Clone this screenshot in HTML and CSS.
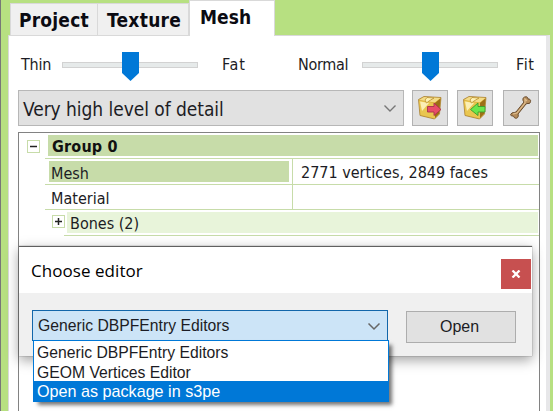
FILE: index.html
```
<!DOCTYPE html>
<html lang="en">
<head>
<meta charset="utf-8">
<title>Mesh editor</title>
<link rel="stylesheet" href="styles.css">
</head>
<body>
<div class="window">
  <nav class="tabs">
    <div class="tab tab-project"><span>Project</span></div>
    <div class="tab tab-texture"><span>Texture</span></div>
    <div class="tab active"><span>Mesh</span></div>
  </nav>
  <main class="panel">
    <div class="sliders">
      <span class="label thin">Thin</span>
      <div class="slider"><svg class="thumb" width="17" height="29" viewBox="0 0 17 29"><path d="M0 0H17V21L8.5 29L0 21Z"/></svg></div>
      <span class="label fat">Fat</span>
      <span class="label normal">Normal</span>
      <div class="slider"><svg class="thumb" width="17" height="29" viewBox="0 0 17 29"><path d="M0 0H17V21L8.5 29L0 21Z"/></svg></div>
      <span class="label fit">Fit</span>
    </div>
    <div class="toolbar">
      <div class="select"><span>Very high level of detail</span>
        <svg width="14" height="9" viewBox="0 0 14 9"><path d="M1.5 1.5L7 7L12.5 1.5" fill="none" stroke="#777" stroke-width="1.4"/></svg>
      </div>
      <button class="tool"><svg width="26" height="26" viewBox="0 0 26 26">
        <path d="M1.500 4.500L7 1.500L24 2.500L22.500 19L17.500 24L3 20.500Z" fill="#d5a52a" stroke="#a98337" stroke-width=".8"/>
        <path d="M2 5L7 2L23.500 3L18 7.500Z" fill="#f3dc88"/><path d="M2 5.500L18 8V23.500L3.500 20Z" fill="#e9c650"/>
        <path d="M3 6.500L12 8L5 16Z" fill="#fbefb5"/><path d="M18 8L23.500 3.500L22 18.500L18 23Z" fill="#9c6f16"/>
        <path d="M10 2.500L8 5L9.500 8L12 6L17 3Z" fill="#fff3b4" stroke="#b78d30" stroke-width=".8"/>
        <path d="M10.500 11.500H17V8L24 14.500L17 20.500V17H10.500Z" fill="#e84d68" stroke="#a8324a" stroke-width=".9"/>
      </svg></button>
      <button class="tool import"><svg width="26" height="26" viewBox="0 0 26 26">
        <path d="M1.500 4.500L7 1.500L24 2.500L22.500 19L17.500 24L3 20.500Z" fill="#d5a52a" stroke="#a98337" stroke-width=".8"/>
        <path d="M2 5L7 2L23.500 3L18 7.500Z" fill="#f3dc88"/><path d="M2 5.500L18 8V23.500L3.500 20Z" fill="#e9c650"/>
        <path d="M3 6.500L12 8L5 16Z" fill="#fbefb5"/><path d="M18 8L23.500 3.500L22 18.500L18 23Z" fill="#9c6f16"/>
        <path d="M10 2.500L8 5L9.500 8L12 6L17 3Z" fill="#fff3b4" stroke="#b78d30" stroke-width=".8"/>
        <path d="M23 11.500H16V8L8.500 14.500L16 20.500V17H23Z" fill="#6be64c" stroke="#3c9a2c" stroke-width=".9"/>
      </svg></button>
      <button class="tool bone"><svg width="26" height="26" viewBox="0 0 26 26">
        <path d="M3 19C4 17 6 18 8 17L16 7C14 5 15 2 17 2C19 1 20 3 20 4C23 4 23 6 22 8C21 9 19 8 18 9L10 19C11 22 9 24 7 23C6 23 6 21 5 21C3 21 2 20 3 19Z" fill="#b58c5b" stroke="#684a2b" stroke-width="1"/>
        <path d="M5 19L9 18L17 8L17 4L19 6" fill="none" stroke="#dfbd8c" stroke-width="1.2"/>
      </svg></button>
    </div>
    <section class="grid">
      <div class="row group"><i class="toggle">
        <svg width="13" height="13"><path d="M3 6.500H10" stroke="#222" stroke-width="1.500"/></svg></i>
        <div class="band"><b>Group 0</b></div></div>
      <div class="row item"><div class="name selected"><span>Mesh</span></div><div class="value"><span>2771 vertices, 2849 faces</span></div></div>
      <div class="row item short"><div class="name"><span>Material</span></div><div class="value"></div></div>
      <div class="row bones"><i class="toggle">
        <svg width="13" height="13"><path d="M3 6.500H10M6.500 3V10" stroke="#222" stroke-width="1.500"/></svg></i>
        <div class="band"><span>Bones (2)</span></div></div>
    </section>
  </main>
</div>
<div class="dialog">
  <header><span class="title">Choose editor</span><button class="close"><svg width="10" height="8" viewBox="0 0 10 8"><path d="M1.500 .5L8.500 7.500M8.500 .5L1.500 7.500" stroke="#fff" stroke-width="2.300"/></svg></button></header>
  <div class="content">
    <div class="combo"><span class="generic">Generic DBPFEntry Editors</span>
      <svg width="14" height="9" viewBox="0 0 14 9"><path d="M1.500 1.500L7 7L12.500 1.500" fill="none" stroke="#666" stroke-width="1.500"/></svg>
      <div class="menu">
        <div class="option"><span class="generic">Generic DBPFEntry Editors</span></div>
        <div class="option"><span class="geom">GEOM Vertices Editor</span></div>
        <div class="option chosen"><span class="package">Open as package in s3pe</span></div>
      </div>
    </div>
    <button class="open"><span>Open</span></button>
  </div>
</div>
</body>
</html>
```
FILE: styles.css
```
* { box-sizing: border-box; }
body { margin: 0; width: 553px; height: 411px; overflow: hidden; position: relative; background: #b7e081; color: #1c1c24; font-family: "DejaVu Sans Condensed", "DejaVu Sans", sans-serif; font-stretch: condensed; font-size: 17px; }
span, b { white-space: nowrap; }
button { padding: 0; margin: 0; border-radius: 0; display: flex; align-items: center; justify-content: center; }
svg { display: block; flex: none; }
.window { height: 411px; border-left: 1px solid #777; padding-left: 7px; display: flex; flex-direction: column; }
.tabs { height: 35px; padding-left: 2px; display: flex; align-items: flex-end; flex: none; }
.tab { height: 32px; background: #f0f0f0; border: 1px solid #d9d9d9; border-bottom: 0; font-weight: bold; font-size: 19px; line-height: 32px; padding-left: 8px; color: #0b0b12; }
.tab-project { width: 88px; letter-spacing: .2px; }
.tab-texture { width: 91px; padding-left: 9px; border-left: 0; letter-spacing: .3px; }
.tab.active { width: 86px; height: 36px; background: #fff; margin-bottom: -1px; padding-left: 10px; line-height: 33px; position: relative; letter-spacing: .1px; }
.panel { width: 542px; flex: 1; background: #fff; border: 1px solid #d9d9d9; border-right: 4px solid #e7e7e9; border-bottom: 0; padding: 0 6px 0 9px; }
.sliders { height: 54px; display: flex; align-items: center; padding: 4px 0 0 3px; }
.label { font-size: 16px; line-height: 22px; flex: none; }
.thin { width: 41px; letter-spacing: -.2px; }
.slider { width: 136px; flex: none; height: 6px; background: #e6eaea; border: 1px solid #d2d2d2; display: flex; justify-content: center; align-items: center; }
.thumb { fill: #0078d7; position: relative; top: 1px; }
.fat { width: 75px; padding-left: 24px; letter-spacing: .8px; }
.normal { width: 89px; padding-left: 25px; letter-spacing: -.3px; }
.fit { padding-left: 18px; letter-spacing: .6px; }
.toolbar { height: 36px; display: flex; }
.select { width: 386px; border: 1px solid #b7b7b7; background: #e1e1e1; display: flex; justify-content: space-between; align-items: center; padding: 1px 6px 0 4px; font-size: 19px; letter-spacing: -.05px; }
.tool { width: 36px; height: 36px; background: #e1e1e1; border: 1px solid #b2b2b2; margin-left: 8px; }
.tool.import { margin-left: 9px; }
.tool.bone { margin-left: 10px; }
.grid { margin-top: 6px; width: 522px; height: 290px; border: 1px solid #828282; padding: 2px 0 0 26px; font-size: 16px; color: #1c1c24; }
.row { display: flex; height: 26px; border-bottom: 1px solid #c7dca9; position: relative; }
.row.group { height: 24px; }
.row.short { height: 25px; }
.toggle { width: 13px; height: 13px; border: 1px solid #c7dca9; flex: none; display: flex; align-items: center; justify-content: center; }
.group .toggle { margin: 5px 8px 0 -18px; }
.band { background: #c7dca9; flex: 1; height: 21px; line-height: 24px; padding-left: 4px; margin-right: 1px; }
.band b { letter-spacing: .2px; color: #111; }
.name { width: 248px; padding: 2px 3px 0 4px; border-right: 1px solid #c7dca9; }
.name span { display: block; padding-left: 2px; height: 21px; line-height: 25px; }
.selected span { background: #c7dca9; }
.short .name span { line-height: 23px; }
.value { line-height: 28px; padding-left: 8px; }
.bones { margin-left: 19px; }
.bones .toggle { margin: 5px 2px 0 -12px; }
.bones .band { background: #e8f4da; margin-top: 2px; line-height: 23px; padding-left: 3px; }
.dialog { position: absolute; left: 19px; top: 246px; width: 513px; height: 110px; background: #f0f0f0; border-top: 1px solid #606060; box-shadow: 0 4px 12px rgba(0,0,0,.38), 0 0 1px #777; color: #000; }
.dialog header { height: 46px; background: #fff; display: flex; justify-content: space-between; padding: 12px 1px 0 12px; }
.title { font: 17px/24px "Open Sans", sans-serif; letter-spacing: .05px; }
.close { width: 30px; height: 30px; background: #c75050; border: 0; }
.content { display: flex; padding: 17px 0 0 13px; font-family: "Liberation Sans", sans-serif; font-size: 17px; color: #1c1c24; }
.content span { display: block; transform: scaleX(.925); transform-origin: left; }
.combo { width: 356px; height: 31px; background: #cce4f7; border: 1px solid #1266aa; display: flex; align-items: center; justify-content: space-between; padding: 1px 6px 0 5px; position: relative; }
.menu { position: absolute; left: 0; top: 29px; width: 356px; height: 62px; border: 1px solid #0078d7; background: #fff; box-shadow: 4px 4px 4px -1px rgba(0,0,0,.55); }
.option { height: 20px; line-height: 23px; padding-left: 3px; }
.option .package { transform: scaleX(.95); }
.chosen { height: 20px; background: #0078d7; color: #fff; line-height: 21px; }
.open { width: 110px; height: 32px; margin: 1px 0 0 18px; background: #e1e1e1; border: 1px solid #adadad; font: 17px "Liberation Sans", sans-serif; color: #1c1c24; }
.open span { transform: scaleX(.94); }
```
